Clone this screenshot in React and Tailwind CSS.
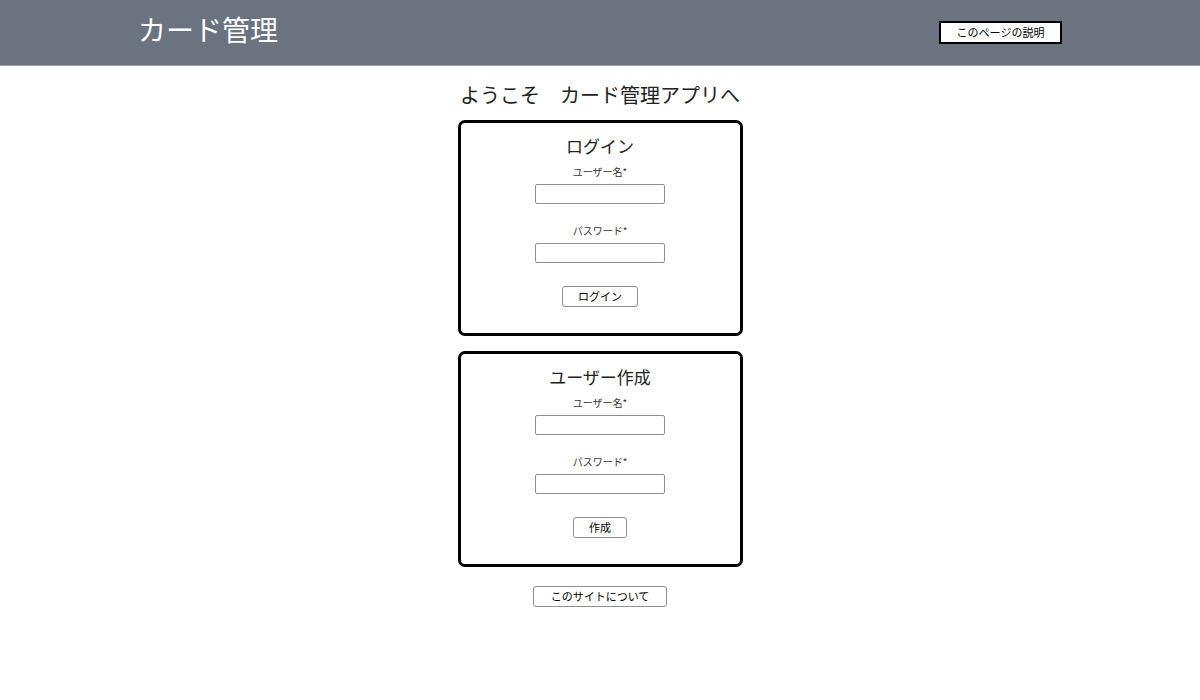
import React from 'react';

const font = { fontFamily: '"Noto Sans CJK JP", "Noto Sans", sans-serif' };

const AuthCard = ({ title, submit, btnWidth }) => (
  <div className="w-[285px] h-[216px] border-[3px] border-black rounded-[7px] flex flex-col items-center pt-[10px]">
    <h3 className="text-[17px] leading-[26px] text-[#222]">{title}</h3>
    <label className="mt-[6px] text-[10px] leading-[14px] text-[#333]">ユーザー名*</label>
    <input className="mt-[5px] w-[130px] h-[20px] border border-[#8f8f8f] rounded-[2px] bg-white" />
    <label className="mt-[20px] text-[10px] leading-[14px] text-[#333]">パスワード*</label>
    <input type="password" className="mt-[5px] w-[130px] h-[20px] border border-[#8f8f8f] rounded-[2px] bg-white" />
    <button className={`mt-[23px] h-[21px] border border-[#8f8f8f] rounded-[3px] bg-white text-[11px] text-black ${btnWidth}`}>
      {submit}
    </button>
  </div>
);

const App = () => {
  return (
    <div className="min-h-[700px] bg-white" style={font}>
      <header className="h-[66px] bg-[#6b7280] border-b border-[#9ca3af]">
        <div className="w-[924px] mx-auto h-full flex items-center justify-between">
          <h1 className="text-[28px] leading-none text-white pb-[8px]">カード管理</h1>
          <button className="w-[123px] h-[23px] border-2 border-black bg-white text-[11px] text-black mb-[1px]">
            このページの説明
          </button>
        </div>
      </header>

      <main className="flex flex-col items-center">
        <h2 className="mt-[15px] text-[20px] leading-[28px] text-[#222]">ようこそ　カード管理アプリへ</h2>
        <div className="mt-[11px] flex flex-col gap-[15px]">
          <AuthCard title="ログイン" submit="ログイン" btnWidth="w-[76px]" />
          <AuthCard title="ユーザー作成" submit="作成" btnWidth="w-[54px]" />
        </div>
        <button className="mt-[19px] w-[134px] h-[21px] border border-[#8f8f8f] rounded-[3px] bg-white text-[11px] text-black">
          このサイトについて
        </button>
      </main>
    </div>
  );
};

export default App;
